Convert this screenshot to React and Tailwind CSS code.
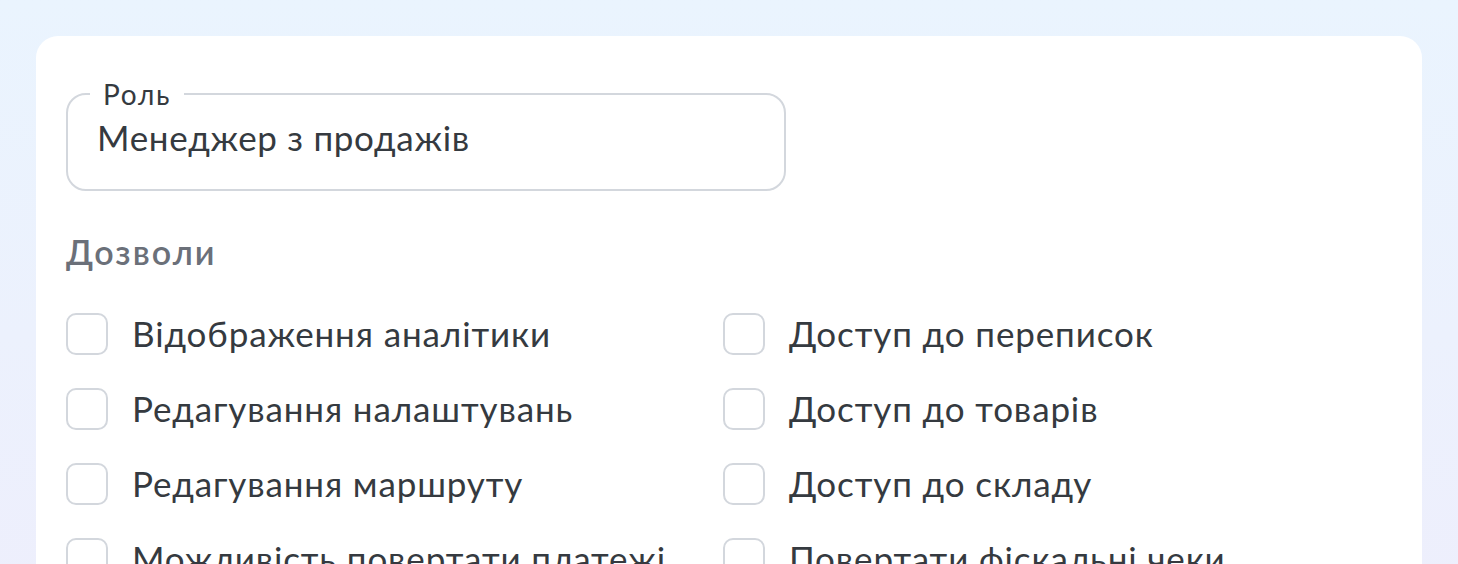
import React from 'react';

const leftPerms = [
    'Відображення аналітики',
    'Редагування налаштувань',
    'Редагування маршруту',
    'Можливість повертати платежі',
];

const rightPerms = [
    'Доступ до переписок',
    'Доступ до товарів',
    'Доступ до складу',
    'Повертати фіскальні чеки',
];

const Checkbox = ({ label }) => (
    <label className="flex items-center gap-6 h-[75px] cursor-pointer">
        <span className="w-[42px] h-[42px] shrink-0 rounded-[10px] border-2 border-[#d3d7dd] bg-white" />
        <span className="text-[35px] tracking-[0.025em] text-[#353a40] leading-none whitespace-nowrap">{label}</span>
    </label>
);

export default function App() {
    return (
        <div className="min-h-screen bg-gradient-to-b from-[#eaf4fe] to-[#eeeefc] p-9 font-['Lato','Noto_Sans',sans-serif]">
            <div className="bg-white rounded-[22px] px-[30px] pt-[44px] pb-10 min-h-[600px]">
                {/* Role input */}
                <fieldset className="w-[720px] h-[111px] border-2 border-[#d3d7dd] rounded-[20px] pl-[22px] pr-6">
                    <legend className="px-[13px] text-[28px] tracking-[0.06em] leading-none text-[#353a40]">Роль</legend>
                    <div className="pl-[7px] pt-[12px] text-[35px] tracking-[0.02em] leading-none text-[#353a40]">Менеджер з продажів</div>
                </fieldset>

                {/* Permissions */}
                <h2 className="mt-[44px] text-[34px] tracking-[0.06em] font-semibold text-[#6b7079] leading-none">Дозволи</h2>
                <div className="mt-[27px] grid grid-cols-[657px_1fr]">
                    <div className="flex flex-col">
                        {leftPerms.map((p) => <Checkbox key={p} label={p} />)}
                    </div>
                    <div className="flex flex-col">
                        {rightPerms.map((p) => <Checkbox key={p} label={p} />)}
                    </div>
                </div>
            </div>
        </div>
    );
}
